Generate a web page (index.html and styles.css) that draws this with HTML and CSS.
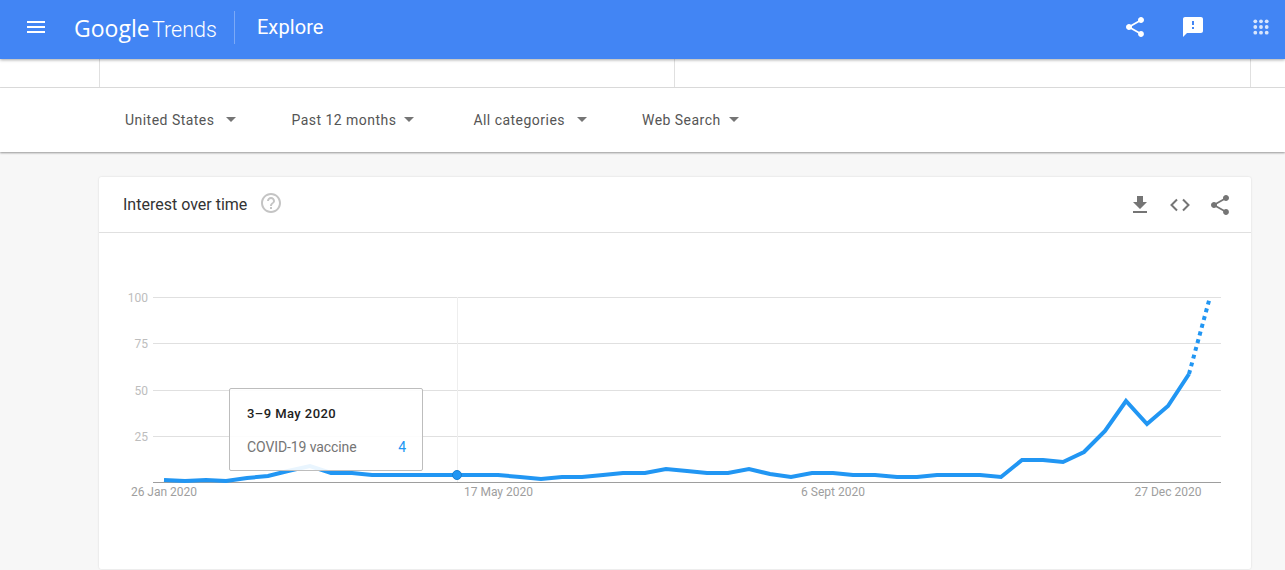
FILE: index.html
```html
<!DOCTYPE html>
<html>
  <head>
    <meta charset="UTF-8">
    <title>Explore - Google Trends</title>
    <link rel="stylesheet" href="styles.css">
  </head>
  <body>
    <header class="topbar">
      <svg class="icon menu-icon" viewBox="0 0 24 24"><path d="M3 18h18v-2H3v2zm0-5h18v-2H3v2zm0-7v2h18V6H3z"/></svg>
      <div class="logo"><span class="logo-google">Google</span><span class="logo-trends">Trends</span></div>
      <div class="topbar-title">Explore</div>
      <div class="topbar-actions">
        <svg class="icon" viewBox="0 0 24 24"><path d="M18 16.08c-.76 0-1.44.3-1.96.77L8.91 12.7c.05-.23.09-.46.09-.7s-.04-.47-.09-.7l7.05-4.11c.54.5 1.25.81 2.04.81 1.66 0 3-1.34 3-3s-1.34-3-3-3-3 1.34-3 3c0 .24.04.47.09.7L8.04 9.81C7.5 9.31 6.79 9 6 9c-1.66 0-3 1.34-3 3s1.34 3 3 3c.79 0 1.5-.31 2.04-.81l7.12 4.16c-.05.21-.08.43-.08.65 0 1.61 1.31 2.92 2.92 2.92 1.61 0 2.92-1.31 2.92-2.92s-1.31-2.92-2.92-2.92z"/></svg>
        <svg class="icon feedback-icon" viewBox="0 0 24 24"><path d="M20 2H4c-1.1 0-1.99.9-1.99 2L2 22l4-4h14c1.1 0 2-.9 2-2V4c0-1.1-.9-2-2-2zm-7 12h-2v-2h2v2zm0-4h-2V6h2v4z"/></svg>
        <svg class="icon apps-icon" viewBox="0 0 24 24">
          <circle cx="6" cy="6" r="2"/><circle cx="12" cy="6" r="2"/><circle cx="18" cy="6" r="2"/>
          <circle cx="6" cy="12" r="2"/><circle cx="12" cy="12" r="2"/><circle cx="18" cy="12" r="2"/>
          <circle cx="6" cy="18" r="2"/><circle cx="12" cy="18" r="2"/><circle cx="18" cy="18" r="2"/>
        </svg>
      </div>
    </header>

    <div class="compare-band">
      <div class="compare-cell"></div>
      <div class="compare-cell"></div>
    </div>

    <div class="filters">
      <div class="filter">United States<span class="caret"></span></div>
      <div class="filter filter-tight">Past 12 months<span class="caret"></span></div>
      <div class="filter">All categories<span class="caret"></span></div>
      <div class="filter filter-tight">Web Search<span class="caret"></span></div>
    </div>

    <section class="card">
      <div class="card-head">
        <h2 class="card-title">Interest over time</h2>
        <svg class="icon help-icon" viewBox="0 0 24 24"><path d="M11 18h2v-2h-2v2zm1-16C6.48 2 2 6.48 2 12s4.48 10 10 10 10-4.48 10-10S17.52 2 12 2zm0 18c-4.41 0-8-3.59-8-8s3.59-8 8-8 8 3.59 8 8-3.59 8-8 8zm0-14c-2.21 0-4 1.79-4 4h2c0-1.1.9-2 2-2s2 .9 2 2c0 2-3 1.75-3 5h2c0-2.25 3-2.5 3-5 0-2.21-1.79-4-4-4z"/></svg>
        <div class="card-actions">
          <svg class="icon" viewBox="0 0 24 24"><path d="M19 9h-4V3H9v6H5l7 7 7-7zM5 18v2h14v-2H5z"/></svg>
          <svg class="icon embed-icon" viewBox="0 0 24 24"><path d="M9 6.5L3.5 12 9 17.5M15 6.5l5.500 5.500L15 17.500"/></svg>
          <svg class="icon" viewBox="0 0 24 24"><path d="M18 16.08c-.76 0-1.44.3-1.96.77L8.91 12.7c.05-.23.09-.46.09-.7s-.04-.47-.09-.7l7.05-4.11c.54.5 1.25.81 2.04.81 1.66 0 3-1.34 3-3s-1.34-3-3-3-3 1.34-3 3c0 .24.04.47.09.7L8.04 9.81C7.5 9.31 6.79 9 6 9c-1.66 0-3 1.34-3 3s1.34 3 3 3c.79 0 1.5-.31 2.04-.81l7.12 4.16c-.05.21-.08.43-.08.65 0 1.61 1.31 2.92 2.92 2.92 1.61 0 2.92-1.31 2.92-2.92s-1.31-2.92-2.92-2.92z"/></svg>
        </div>
      </div>

      <div class="chart">
        <!-- viewBox keeps page coordinates so points read straight off the screen -->
        <svg class="chart-svg" viewBox="99 233 1152 336">
          <g class="grid">
            <line x1="153" x2="1221" y1="297.500" y2="297.500"/>
            <line x1="153" x2="1221" y1="343.500" y2="343.500"/>
            <line x1="153" x2="1221" y1="390.500" y2="390.500"/>
            <line x1="153" x2="1221" y1="436.500" y2="436.500"/>
          </g>
          <line class="hover-line" x1="457.500" x2="457.500" y1="297" y2="482"/>
          <line class="axis" x1="153" x2="1221" y1="482.500" y2="482.500"/>
          <g class="y-labels">
            <text x="148" y="302">100</text>
            <text x="148" y="348">75</text>
            <text x="148" y="395">50</text>
            <text x="148" y="441">25</text>
          </g>
          <g class="x-labels">
            <text x="164" y="496">26 Jan 2020</text>
            <text x="498.500" y="496">17 May 2020</text>
            <text x="833" y="496">6 Sept 2020</text>
            <text x="1168" y="496">27 Dec 2020</text>
          </g>
          <polyline class="trend" points="164,480 185,481 206,480 226,481 247,478 268,476 288,471 310,466 331,473 352,473 372,475 393,475 414,475 435,475 457,475 477,475 498,475 520,477 541,479 562,477 582,477 603,475 623,473 645,473 666,469 687,471 707,473 728,473 749,469 770,474 791,477 812,473 833,473 853,475 875,475 897,477 917,477 937,475 958,475 980,475 1001,477 1022,460 1043,460 1063,462 1084,452 1105,431 1126,401 1147,424 1168,406 1189,374"/>
          <polyline class="trend trend-partial" points="1189,374 1210,297"/>
          <circle class="hover-dot" cx="457" cy="475" r="4.500"/>
        </svg>
        <div class="tooltip">
          <div class="tooltip-date">3–9 May 2020</div>
          <div class="tooltip-row"><span>COVID-19 vaccine</span><span class="tooltip-value">4</span></div>
        </div>
      </div>
    </section>
  </body>
</html>
```

FILE: styles.css
```css
html, body {
  margin: 0;
  height: 570px;
  overflow: hidden;
}
body {
  background-color: #f7f7f7;
  font-family: Roboto, "Liberation Sans", sans-serif;
}
.icon {
  display: block;
  width: 24px;
  height: 24px;
  flex: none;
}

/* blue bar */
.topbar {
  position: relative;
  z-index: 2;
  display: flex;
  align-items: center;
  height: 59px;
  padding: 0 12px 5px 24px;
  box-sizing: border-box;
  background-color: #4285f4;
  box-shadow: 0 1px 3px rgba(0, 0, 0, 0.35);
  color: #fff;
  fill: #fff;
}
.logo {
  display: flex;
  align-items: baseline;
  height: 33px;
  margin: 1px 0 0 26px;
  padding-right: 17px;
  border-right: 1px solid rgba(255, 255, 255, 0.3);
  line-height: 34px;
}
.logo-google {
  width: 78px;
  font-family: "Open Sans", sans-serif;
  font-size: 23px;
}
.logo-trends {
  font-family: Roboto, sans-serif;
  font-size: 21.5px;
  font-weight: 300;
}
.topbar-title {
  margin-left: 22px;
  font-size: 20px;
  letter-spacing: 0.1px;
}
.topbar-actions {
  display: flex;
  margin-left: auto;
  gap: 34px;
}
.apps-icon {
  margin-left: 10px;
  opacity: 0.8;
  transform: scale(0.95);
}

/* compare row, cut off under the bar */
.compare-band {
  display: flex;
  height: 28px;
  padding-left: 99px;
  background-color: #fff;
  border-bottom: 1px solid #e0e0e0;
}
.compare-cell {
  width: 574px;
  border-left: 1px solid #e0e0e0;
}
.compare-cell + .compare-cell {
  width: 575px;
  border-right: 1px solid #e0e0e0;
}

/* filters */
.filters {
  display: flex;
  align-items: center;
  height: 64px;
  padding: 0 0 1px 125px;
  box-sizing: border-box;
  background-color: #fff;
  box-shadow: 0 1px 2px rgba(0, 0, 0, 0.4);
  font-size: 14px;
  letter-spacing: 0.47px;
  color: #555;
}
.filter {
  display: flex;
  align-items: center;
  margin-right: 55px;
}
.filter-tight .caret {
  margin-left: 8px;
}
.filter-tight:nth-child(2) {
  margin-right: 59px;
}
.caret {
  width: 0;
  height: 0;
  margin-left: 12px;
  border-left: 5.5px solid transparent;
  border-right: 5.5px solid transparent;
  border-top: 5.5px solid #757575;
}

/* card */
.card {
  display: flex;
  flex-direction: column;
  width: 1152px;
  height: 392px;
  margin: 25px 0 0 99px;
  background-color: #fff;
  border-radius: 2px;
  box-shadow: 0 0 2px rgba(0, 0, 0, 0.15);
}
.card-head {
  display: flex;
  align-items: center;
  height: 55px;
  padding: 0 19px 0 24px;
  border-bottom: 1px solid #e0e0e0;
  flex: none;
}
.card-title {
  margin: 0;
  font-size: 16px;
  font-weight: 400;
  line-height: 54px;
  color: #333;
}
.help-icon {
  margin: 0 0 3px 12px;
  fill: #c4c4c4;
}
.card-actions {
  display: flex;
  margin-left: auto;
  gap: 16px;
  fill: #757575;
}
.embed-icon {
  fill: none;
  stroke: #757575;
  stroke-width: 2;
}

/* chart */
.chart {
  position: relative;
  flex: 1;
}
.chart-svg {
  display: block;
  width: 1152px;
  height: 336px;
}
.grid line {
  stroke: #e0e0e0;
  stroke-width: 1;
}
.axis {
  stroke: #9e9e9e;
  stroke-width: 1;
}
.hover-line {
  stroke: #eeeeee;
  stroke-width: 1;
}
.y-labels text {
  font-size: 12px;
  text-anchor: end;
  fill: #bdbdbd;
}
.x-labels text {
  font-size: 12px;
  text-anchor: middle;
  fill: #9e9e9e;
}
.trend {
  fill: none;
  stroke: #2196f3;
  stroke-width: 4;
}
.trend-partial {
  stroke-dasharray: 4 4;
}
.hover-dot {
  fill: #2196f3;
  stroke: #1a7fd0;
  stroke-width: 1;
}
.tooltip {
  position: absolute;
  left: 130px;
  top: 155px;
  width: 194px;
  height: 83px;
  padding: 17px 16px 0 17px;
  box-sizing: border-box;
  background-color: rgba(255, 255, 255, 0.9);
  border: 1px solid #bdbdbd;
  border-radius: 2px;
}
.tooltip-date {
  font-size: 13px;
  font-weight: 500;
  line-height: 16px;
  letter-spacing: 0.45px;
  color: #212121;
}
.tooltip-row {
  display: flex;
  justify-content: space-between;
  margin-top: 17px;
  font-size: 14px;
  line-height: 16px;
  letter-spacing: -0.1px;
  color: #757575;
}
.tooltip-value {
  color: #2196f3;
}
```
